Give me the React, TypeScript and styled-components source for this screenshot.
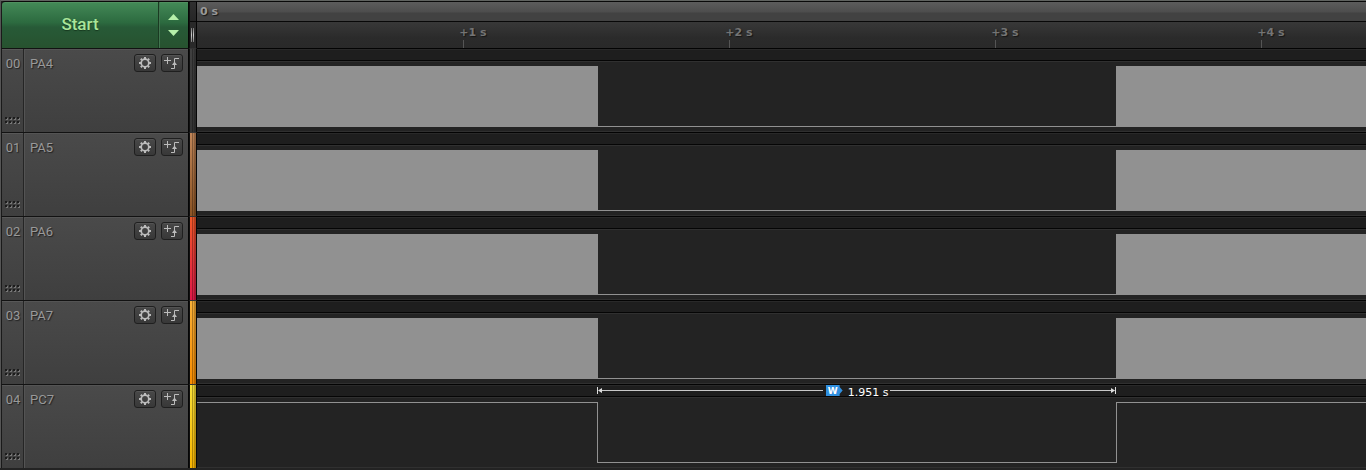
import React from "react";
import styled, { createGlobalStyle } from "styled-components";

const PX_PER_SECOND = 266;

const Global = createGlobalStyle`
  *, *::before, *::after { box-sizing: border-box; }
  body { margin: 0; background: #232323; overflow: hidden; font-family: Roboto, "Liberation Sans", sans-serif; }
  button { font: inherit; padding: 0; margin: 0; cursor: pointer; }
`;

const Page = styled.main`
  display: grid;
  grid-template-columns: 188px 8px minmax(0, 1fr);
  border-top: 1px solid #606360;
  border-left: 1px solid #555;
`;

const HeaderCell = styled.div`
  height: 47px;
  border-top: 1px solid #0a0a0a;
`;

const StartBar = styled(HeaderCell)`
  display: flex;
  border-left: 1px solid #1a1a1a;
  border-right: 1px solid #060606;
  border-top-left-radius: 4px;
  overflow: hidden;
  background: linear-gradient(#448a58, #2c6a3f 45%, #275a37 55%, #27522f);
  box-shadow: inset 0 1px #509060;
`;

const StartButton = styled.button`
  flex: 1;
  border: 0;
  padding-bottom: 2px;
  background: transparent;
  color: #a9e59a;
  font-size: 17px;
  font-weight: 500;
  line-height: 20px;
  text-shadow: 0 1px 1px #17391f;
`;

const Stepper = styled.div`
  display: flex;
  flex-direction: column;
  justify-content: center;
  width: 30px;
  border-left: 1px solid #1a3a22;
  box-shadow: inset 1px 0 #41764f;
`;

const StepButton = styled.button`
  height: 16px;
  border: 0;
  background: transparent;
  display: flex;
  align-items: center;
  justify-content: center;
`;

const Splitter = styled(HeaderCell)`
  display: flex;
  flex-direction: column;
  border-left: 1px solid #101010;
  border-right: 1px solid #050505;
  background: #343434;
`;

const SplitterTop = styled.div`
  height: 20px;
  border-bottom: 1px solid #080808;
  background: linear-gradient(#303030, #262626);
`;

const SplitterGrip = styled.div`
  flex: 1;
  display: flex;
  align-items: center;
  gap: 1px;
  padding-left: 1px;
  background: #292929;
`;

const GripBar = styled.span`
  width: 1px;
  height: 14px;
  background: linear-gradient(#777, #ccc, #777);
`;

const Ruler = styled(HeaderCell)`
  display: flex;
  flex-direction: column;
  font-family: "DejaVu Sans", Verdana, sans-serif;
  font-size: 11px;
  font-weight: 700;
  text-shadow: 1px 1px 1px #151515;
`;

const RulerTop = styled.div`
  height: 20px;
  padding-left: 3px;
  line-height: 20px;
  color: #999;
  border-bottom: 1px solid #080808;
  background: linear-gradient(#5c5c5c, #4d4d4d 10px, #424242 11px, #424242);
`;

const RulerTicks = styled.div`
  flex: 1;
  display: flex;
  overflow: hidden;
  padding-left: 133px;
  color: #747474;
  background: linear-gradient(#383838, #2b2b2b 60%, #292929);
`;

const Tick = styled.div`
  flex: none;
  width: ${PX_PER_SECOND}px;
  display: flex;
  flex-direction: column;
  align-items: center;
  line-height: 14px;
  padding-top: 4px;

  span { margin-left: 20px; }
  &::after { content: ""; width: 1px; flex: 1; background: #555; margin-left: 1px; }
`;

const ChannelPanel = styled.section`
  display: flex;
  height: 84px;
  color: #999;
  font-size: 13px;
  line-height: 16px;
  text-shadow: 1px 1px 1px #222;
  background: linear-gradient(#4a4a4a, #3f3f3f);
  border-top: 1px solid #121212;
  border-left: 1px solid #1a1a1a;
  border-right: 1px solid #060606;
  box-shadow: inset 0 1px #585858;
`;

const IndexColumn = styled.div`
  width: 22px;
  display: flex;
  flex-direction: column;
  align-items: center;
  justify-content: space-between;
  padding: 7px 0 7px 1px;
  border-right: 1px solid #252525;
`;

const ChannelBody = styled.div`
  flex: 1;
  display: flex;
  align-items: flex-start;
  gap: 5px;
  padding: 5px 5px 0 6px;
  box-shadow: inset 1px 1px #545454;
`;

const ChannelName = styled.span`
  flex: 1;
  padding-top: 2px;
`;

const IconButton = styled.button`
  width: 22px;
  height: 18px;
  display: flex;
  align-items: center;
  justify-content: center;
  border: 1px solid #1f1f1f;
  border-radius: 3px;
  background: linear-gradient(#484848, #383838);
  color: #bcbcbc;
  box-shadow: inset 0 1px #535353;
`;

const ColorStrip = styled.div<{ $from: string; $to: string }>`
  height: 84px;
  border-left: 1px solid #101010;
  border-right: 1px solid #050505;
  border-top: 1px solid #343434;
  background: linear-gradient(90deg, transparent 3px, rgba(0, 0, 0, 0.3) 3px 4px, rgba(0, 0, 0, 0.06) 4px 5px, rgba(0, 0, 0, 0.26) 5px),
    linear-gradient(${p => p.$from}, ${p => p.$to});
  background-origin: border-box;
`;

const Track = styled.div`
  height: 84px;
  display: flex;
  flex-direction: column;
  overflow: hidden;
  border-top: 1px solid #030303;
  border-bottom: 1px solid #303030;
  background: #232323;
`;

const MeasureLane = styled.div`
  height: 12px;
  display: flex;
  align-items: flex-start;
  background: #1e1e1e;
  border-top: 1px solid #292929;
  border-bottom: 1px solid #050505;
`;

const Wave = styled.div`
  flex: 1;
  display: flex;
  padding: 4px 0;
  border-top: 1px solid #303030;
`;

const Segment = styled.div<{ $span?: number; $kind: "busy" | "low" | "high" }>`
  flex: ${p => (p.$span ? `none` : `1`)};
  width: ${p => (p.$span ? `${p.$span}px` : `auto`)};
  background: ${p => (p.$kind === "busy" ? "#919191" : "transparent")};
  border-top: ${p => (p.$kind === "high" ? "1px solid #919191" : "0")};
  border-bottom: ${p => (p.$kind === "low" ? "1px solid #919191" : "0")};
`;

const PulseSegment = styled(Segment)`
  border-left: 1px solid #919191;
  border-right: 1px solid #919191;
`;

const Measurement = styled.div`
  display: flex;
  align-items: center;
  width: 519px;
  height: 9px;
  margin-left: 400px;
  color: #fff;
  font-family: "DejaVu Sans", Verdana, sans-serif;
  font-size: 11px;
  line-height: 12px;
`;

const Arrow = styled.div<{ $end?: boolean }>`
  flex: 1;
  display: flex;
  align-items: center;
  flex-direction: ${p => (p.$end ? "row-reverse" : "row")};
  color: #ddd;

  &::after { content: ""; flex: 1; height: 1px; background: #c8c8c8; }
`;

const WidthTag = styled.span`
  width: 17px;
  height: 11px;
  margin: 0 5px 0 3px;
  padding-left: 2px;
  line-height: 12px;
  font-size: 9px;
  font-weight: 700;
  background: #2f8fdf;
  clip-path: polygon(0 0, 14px 0, 14px 2px, 17px 50%, 14px 9px, 14px 100%, 0 100%);
`;

const MeasureValue = styled.span`
  padding-top: 4px;
  margin-right: 2px;
`;

const Gear = () => (
  <svg width="14" height="14" viewBox="0 0 14 14" fill="none" stroke="currentColor">
    <circle cx="7" cy="7" r="3.8" strokeWidth="1.7" />
    <path d="M7 1v2M7 11v2M1 7h2M11 7h2M2.8 2.8l1.2 1.2M10 10l1.2 1.2M11.2 2.8L10 4M4 10l-1.2 1.2" strokeWidth="2" />
  </svg>
);

const Trigger = () => (
  <svg width="16" height="14" viewBox="0 0 16 14" fill="none" stroke="currentColor" strokeWidth="1">
    <path d="M0 4.5h7M3.5 1v7M15 2.5h-4.5v10H7" />
    <path d="M8 9h5L10.5 5.5z" fill="currentColor" stroke="none" />
  </svg>
);

const DragDots = () => (
  <svg width="16" height="8" viewBox="0 0 16 8">
    {[0, 4, 8, 12].map(x =>
      [0, 4].map(y => (
        <g key={`${x}-${y}`}>
          <rect x={x + 1} y={y + 1} width="2" height="2" fill="#777" />
          <rect x={x} y={y} width="2" height="2" fill="#1c1c1c" />
        </g>
      ))
    )}
  </svg>
);

const ArrowHead = ({ end }: { end?: boolean }) => (
  <svg width="5" height="7" viewBox="0 0 5 7">
    <path d={end ? "M4 0h1v7H4zM4 3.5L0 1v5z" : "M0 0h1v7H0zM1 3.5L5 1v5z"} fill="currentColor" />
  </svg>
);

const channels = [
  { id: "00", name: "PA4", from: "#404040", to: "#343434" },
  { id: "01", name: "PA5", from: "#c08558", to: "#8c5424" },
  { id: "02", name: "PA6", from: "#f05828", to: "#e01848" },
  { id: "03", name: "PA7", from: "#f8b038", to: "#f88c00" },
  { id: "04", name: "PC7", from: "#f8e038", to: "#f8b400", pulse: true },
];

export default function App() {
  return (
    <>
      <Global />
      <Page>
        <StartBar>
          <StartButton>Start</StartButton>
          <Stepper>
            <StepButton aria-label="Increase">
              <svg width="11" height="6"><path d="M0 6L5.5 0 11 6z" fill="#b6efaa" /></svg>
            </StepButton>
            <StepButton aria-label="Decrease">
              <svg width="11" height="6"><path d="M0 0h11L5.5 6z" fill="#b6efaa" /></svg>
            </StepButton>
          </Stepper>
        </StartBar>
        <Splitter>
          <SplitterTop />
          <SplitterGrip><GripBar /><GripBar /></SplitterGrip>
        </Splitter>
        <Ruler>
          <RulerTop>0 s</RulerTop>
          <RulerTicks>
            {[1, 2, 3, 4].map(n => <Tick key={n}><span>+{n} s</span></Tick>)}
          </RulerTicks>
        </Ruler>
        {channels.map(c => (
          <React.Fragment key={c.id}>
            <ChannelPanel>
              <IndexColumn><span>{c.id}</span><DragDots /></IndexColumn>
              <ChannelBody>
                <ChannelName>{c.name}</ChannelName>
                <IconButton aria-label={`${c.name} settings`}><Gear /></IconButton>
                <IconButton aria-label={`${c.name} trigger`}><Trigger /></IconButton>
              </ChannelBody>
            </ChannelPanel>
            <ColorStrip $from={c.from} $to={c.to} />
            <Track>
              <MeasureLane>
                {c.pulse && (
                  <Measurement>
                    <Arrow><ArrowHead /></Arrow>
                    <WidthTag>W</WidthTag>
                    <MeasureValue>1.951 s</MeasureValue>
                    <Arrow $end><ArrowHead end /></Arrow>
                  </Measurement>
                )}
              </MeasureLane>
              <Wave>
                {c.pulse ? (
                  <>
                    <Segment $span={400} $kind="high" />
                    <PulseSegment $span={520} $kind="low" />
                    <Segment $kind="high" />
                  </>
                ) : (
                  <>
                    <Segment $span={401} $kind="busy" />
                    <Segment $span={518} $kind="low" />
                    <Segment $kind="busy" />
                  </>
                )}
              </Wave>
            </Track>
          </React.Fragment>
        ))}
      </Page>
    </>
  );
}
